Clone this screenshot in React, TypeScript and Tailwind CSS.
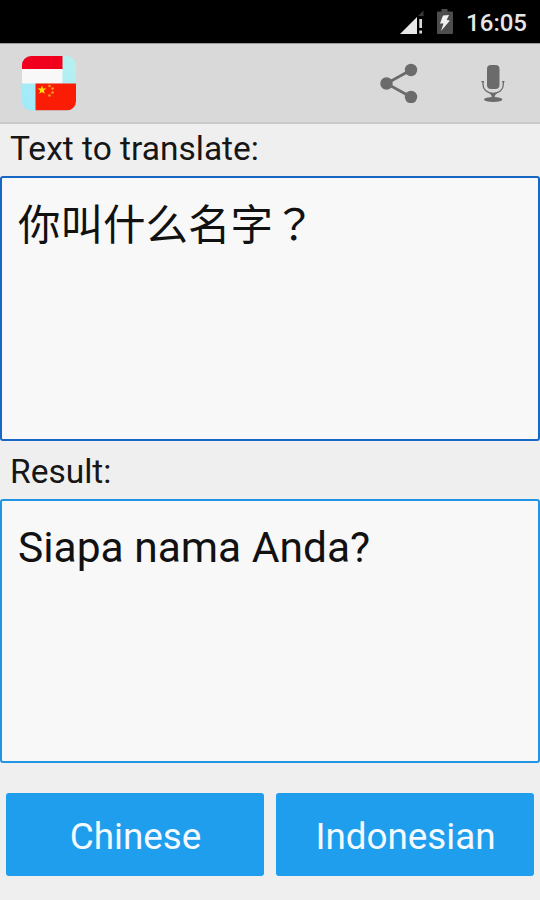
import type { ReactNode } from "react";

function SignalIcon() {
  return (
    <svg width="26" height="26" viewBox="0 0 26 26">
      <path d="M19 7 24.500 1.500V7z" fill="#3a3a3a" />
      <path d="M1 25 18 8v17z" fill="#e8e8e8" />
      <path d="M20.300 10h2.700v9h-2.700zM20.300 21.500h2.700v3h-2.700z" fill="#d8d8d8" />
    </svg>
  );
}

function BatteryIcon() {
  return (
    <svg width="18" height="26" viewBox="0 0 18 26">
      <path
        d="M5.500 0h6v2.500H16q1 0 1 1V24q0 1-1 1H2q-1 0-1-1V3.500q0-1 1-1h3.500z"
        fill="#4d4d4d"
      />
      <path d="m7 6.500 6-.5-2.300 5 3.300.500L5 22l2.500-7.500H4z" fill="#f0f0f0" />
    </svg>
  );
}

function AppLogo() {
  return (
    <svg width="56" height="56" viewBox="0 0 56 56">
      <defs>
        <linearGradient id="sky" x1="1" y1="0" x2="0" y2="1">
          <stop offset="0" stopColor="#b9f0ee" />
          <stop offset="1" stopColor="#9deafb" />
        </linearGradient>
        <clipPath id="tile">
          <rect x="1" y="1" width="54" height="54.500" rx="9" />
        </clipPath>
      </defs>
      <g clipPath="url(#tile)">
        <rect width="56" height="56" fill="url(#sky)" />
        <rect width="41.500" height="14" fill="#f0001c" />
        <rect y="14" width="41.500" height="14.500" fill="#f8f8f8" />
        <rect x="14.500" y="28.500" width="41.500" height="27" fill="#fb1c05" />
        <path
          d="m21 30.500 1.100 3.100h3.300l-2.600 2 1 3.200-2.800-1.900-2.800 1.900 1-3.200-2.600-2h3.300z"
          fill="#ffe400"
        />
        <g fill="#f9a01b">
          <circle cx="28.500" cy="31" r="1.300" />
          <circle cx="31.500" cy="33.500" r="1.300" />
          <circle cx="31.500" cy="37.500" r="1.300" />
          <circle cx="28.500" cy="40.500" r="1.300" />
        </g>
      </g>
    </svg>
  );
}

function ShareIcon() {
  return (
    <svg width="38" height="40" viewBox="0 0 38 40" fill="#6b6b6b">
      <path d="M31 7 6.500 20.500 31 34" fill="none" stroke="#6b6b6b" strokeWidth="2.700" />
      <circle cx="31" cy="7" r="6.200" />
      <circle cx="6.500" cy="20.500" r="6.200" />
      <circle cx="31" cy="34" r="6.200" />
    </svg>
  );
}

function MicIcon() {
  return (
    <svg width="24" height="40" viewBox="0 0 24 40" fill="#6b6b6b">
      <rect x="6" y="2" width="12.500" height="24" rx="4" />
      <path
        d="M.5 18.700h2.500M21 18.700h2.500M2 18.500v3c0 5 4 8.800 10.200 8.800S22.300 26.500 22.300 21.500v-3"
        fill="none"
        stroke="#6b6b6b"
        strokeWidth="1.300"
      />
      <path d="M7.500 29.500q4.700 1.200 9.400 0-3.200 2-3.300 5h-2.800q-.1-3-3.300-5z" />
      <ellipse cx="12.200" cy="36.500" rx="9.200" ry="2.600" />
    </svg>
  );
}

function Label({ children }: { children: ReactNode }) {
  return <div className="pl-[10px] text-[33.500px] leading-[40px] text-[#161616]">{children}</div>;
}

function LanguageButton({ children }: { children: ReactNode }) {
  return (
    <button className="h-[83px] flex-1 rounded-[3px] bg-[#1f9eee] pl-[1px] pt-[4px] text-[36.800px] leading-[44px] text-[#f4faff]">
      {children}
    </button>
  );
}

export default function App() {
  return (
    <div className="flex h-[900px] w-[540px] flex-col overflow-hidden bg-[#efefef] font-['Roboto','Noto_Sans_CJK_SC',sans-serif]">
      <div className="flex h-[43px] shrink-0 items-center justify-end bg-black pr-[13px]">
        <SignalIcon />
        <span className="ml-[11px] mr-[12px]">
          <BatteryIcon />
        </span>
        <span className="pt-[2px] text-[24px] font-medium leading-[30px] text-[#e6e6e6]">16:05</span>
      </div>
      <header className="flex h-[81px] shrink-0 items-center border-b-2 border-t border-b-[#cacaca] border-t-[#9a9a9a] bg-[#d9d9d9] pl-[21px] pr-[35px]">
        <AppLogo />
        <div className="ml-auto flex items-center gap-[63px]">
          <ShareIcon />
          <MicIcon />
        </div>
      </header>
      <div className="h-[52px] shrink-0 pt-[5px]">
        <Label>Text to translate:</Label>
      </div>
      <div className="h-[265px] shrink-0 rounded-[3px] border-2 border-[#1767c5] bg-[#f8f8f8] pl-[16px] pt-[14px] text-[42.500px] leading-[60px] text-[#111]">
        你叫什么名字<span className="font-['Noto_Sans_CJK_TC',sans-serif]">？</span>
      </div>
      <div className="h-[58px] shrink-0 pt-[11px]">
        <Label>Result:</Label>
      </div>
      <div className="h-[264px] shrink-0 rounded-[3px] border-2 border-[#2195e3] bg-[#f8f8f8] pl-[16px] pt-[21px] text-[42.500px] leading-[52px] text-[#111]">
        Siapa nama Anda?
      </div>
      <div className="mt-[30px] flex gap-[12px] px-[6px]">
        <LanguageButton>Chinese</LanguageButton>
        <LanguageButton>Indonesian</LanguageButton>
      </div>
    </div>
  );
}
